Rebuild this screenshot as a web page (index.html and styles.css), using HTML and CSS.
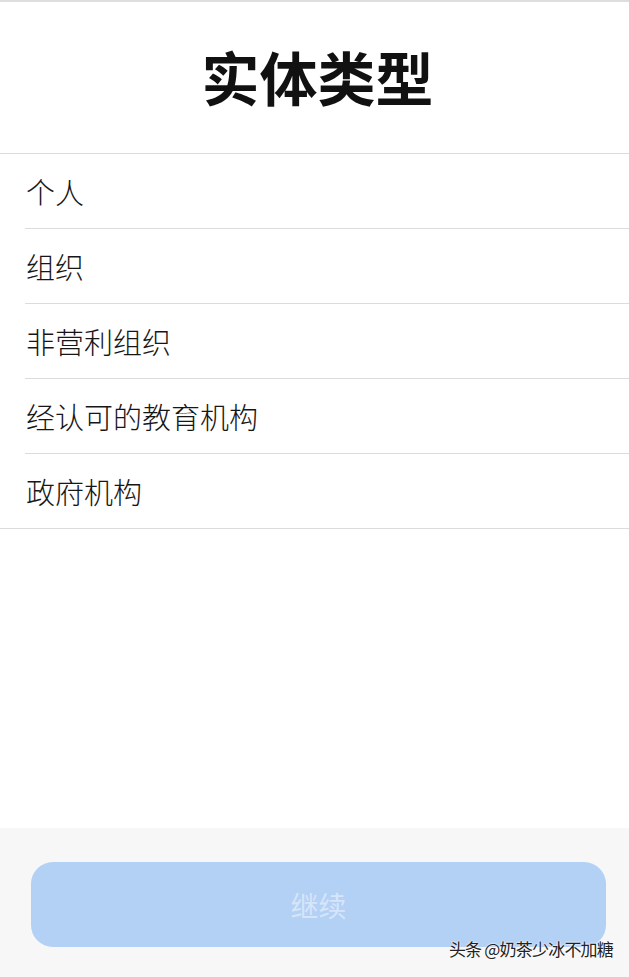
FILE: index.html
```html
<!DOCTYPE html>
<html lang="zh-CN">
<head>
    <meta charset="UTF-8">
    <title>实体类型</title>
    <link rel="stylesheet" href="styles.css">
</head>
<body>

<div class="page">
    <div class="header">
        <h1>实体类型</h1>
    </div>

    <ul class="type-list">
        <li class="type-item">个人</li>
        <li class="type-item">组织</li>
        <li class="type-item">非营利组织</li>
        <li class="type-item">经认可的教育机构</li>
        <li class="type-item">政府机构</li>
    </ul>

    <div class="spacer"></div>

    <div class="footer">
        <button type="button" class="button-disabled" disabled>继续</button>
        <span class="watermark">头条 @奶茶少冰不加糖</span>
    </div>
</div>

</body>
</html>
```

FILE: styles.css
```css
* {
    margin: 0;
    padding: 0;
    box-sizing: border-box;
    font-family: "Noto Sans CJK SC", "Noto Sans", sans-serif;
}

body {
    background-color: #fff;
}

.page {
    position: relative;
    display: flex;
    flex-direction: column;
    height: 977px;
}

.header {
    display: flex;
    align-items: center;
    justify-content: center;
    height: 154px;
    border-top: 2px solid #dedede;
    border-bottom: 1px solid #dcdcdc;
}

.header h1 {
    font-size: 58px;
    font-weight: 700;
    color: #111;
    line-height: 1;
    margin-top: -4px;
    padding-left: 6px;
}

.type-list {
    list-style: none;
    border-bottom: 1px solid #dcdcdc;
}

.type-item {
    display: flex;
    align-items: center;
    height: 75px;
    margin-left: 25px;
    padding-left: 1px;
    font-size: 29px;
    font-weight: 300;
    color: #161616;
    border-bottom: 1px solid #dcdcdc;
}

.type-item:last-child {
    height: 74px;
    border-bottom: none;
}

.spacer {
    flex: 1;
}

.footer {
    position: relative;
    height: 149px;
    padding: 34px 23px 0 31px;
    background-color: #f7f7f7;
}

button {
    display: block;
    width: 100%;
    height: 85px;
    border: none;
    border-radius: 22px;
    font-size: 28px;
    color: #d6e5f9;
}

.button-disabled {
    background-color: #b3d0f5;
}

.watermark {
    position: absolute;
    right: 16px;
    top: 108px;
    font-size: 17px;
    color: #222;
    letter-spacing: -0.8px;
    text-shadow: 0 0 2px #fff, 0 0 2px #fff;
}
```
